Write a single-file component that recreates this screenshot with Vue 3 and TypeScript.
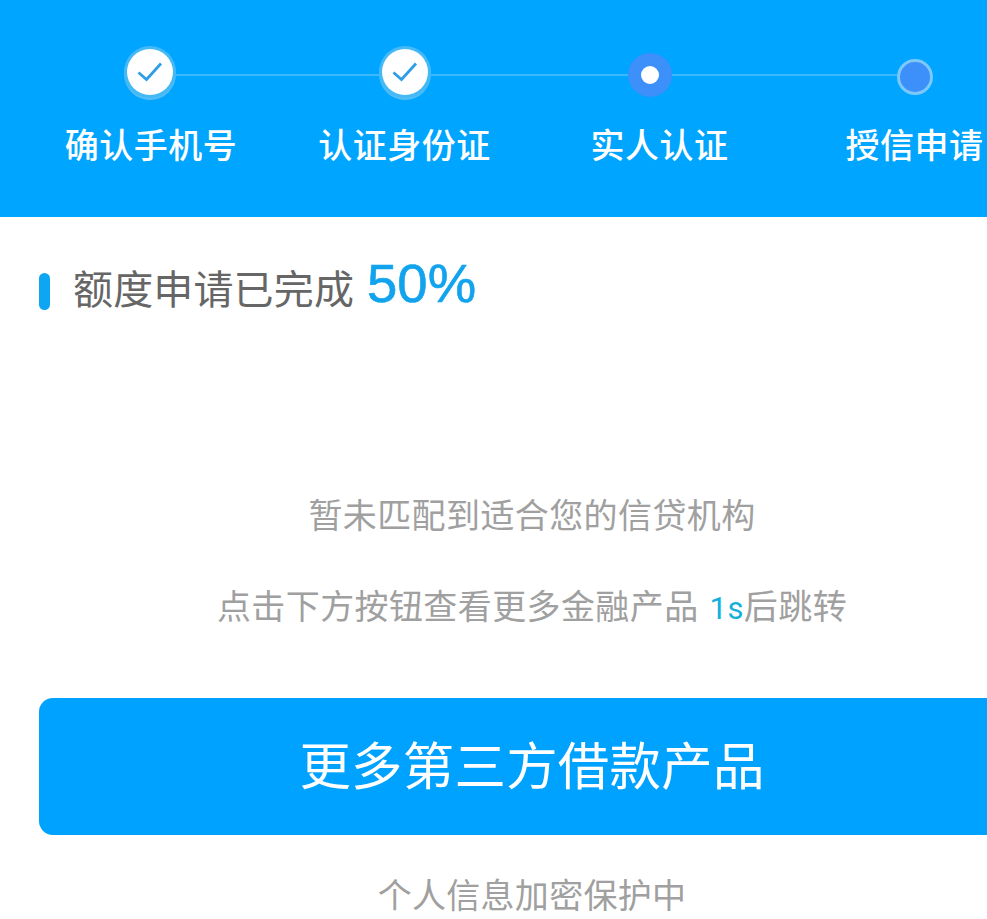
<script setup lang="ts">
interface Step { label: string; state: 'done' | 'current' | 'todo' }
const steps: Step[] = [
  { label: '确认手机号', state: 'done' },
  { label: '认证身份证', state: 'done' },
  { label: '实人认证', state: 'current' },
  { label: '授信申请', state: 'todo' },
]
</script>

<template>
  <div class="viewport">
    <div class="page">
      <header class="steps">
        <div v-for="(s, i) in steps" :key="s.label" class="step">
          <div class="track">
            <span class="line" :class="{ hidden: i === 0, short: s.state === 'current' }"></span>
            <span v-if="s.state === 'done'" class="node done">
              <svg width="26" height="22" viewBox="0 0 26 22" fill="none">
                <path d="M1.5 11.5 L9.5 18.5 L24 2.5" stroke="#2e9fe6" stroke-width="2.8" />
              </svg>
            </span>
            <span v-else-if="s.state === 'current'" class="node current"><i></i></span>
            <span v-else class="node todo"></span>
            <span class="line" :class="{ hidden: i === steps.length - 1 }"></span>
          </div>
          <div class="label">{{ s.label }}</div>
        </div>
      </header>

      <section class="title">
        <span class="bar"></span>
        <span class="title-text">额度申请已完成</span>
        <span class="percent">50%</span>
      </section>

      <section class="message">
        <p class="msg-1">暂未匹配到适合您的信贷机构</p>
        <p class="msg-2">点击下方按钮查看更多金融产品 <em>1s</em>后跳转</p>
      </section>

      <button class="cta" type="button">更多第三方借款产品</button>
      <p class="secure">个人信息加密保护中</p>
    </div>
  </div>
</template>

<style>
html, body { margin: 0; padding: 0; background: #fff; overflow: hidden; }
</style>

<style scoped>
.viewport {
  width: 987px;
  height: 919px;
  overflow: hidden;
  background: #fff;
  font-family: "Noto Sans CJK SC", "Liberation Sans", sans-serif;
}
.page { width: 1064px; }
.steps {
  height: 217px;
  box-sizing: border-box;
  padding: 45px 22px 0;
  background: #00a5ff;
  display: grid;
  grid-template-columns: repeat(4, 255px);
}
.step { display: flex; flex-direction: column; align-items: center; }
.step:first-child .label { margin-left: 3px; }
.track {
  width: 100%;
  height: 60px;
  display: flex;
  align-items: center;
}
.line { flex: 1; height: 2px; background: #3cb8fd; }
.line.short { flex: 0 0 95.5px; }
.line.hidden { visibility: hidden; }
.node { flex: none; display: flex; align-items: center; justify-content: center; border-radius: 50%; box-sizing: border-box; }
.node.done {
  width: 46px;
  height: 46px;
  margin-bottom: 7px;
  background: #fff;
  box-shadow: 0 0 0 3px #45b9f6, 0 2px 0 3px #52bdf3;
}
.node.done svg { display: block; margin-top: 1px; }
.node.current { width: 44px; height: 44px; background: #3d8ffa; }
.node.current i { display: block; width: 18px; height: 18px; border-radius: 50%; background: #fff; }
.node.todo { width: 36px; height: 36px; background: #3d8ffa; border: 3px solid #7cc8f8; margin-top: 3px; }
.label {
  margin-top: 15px;
  font-size: 34px;
  letter-spacing: 0.5px;
  line-height: 48px;
  color: #fff;
  font-weight: 500;
  white-space: nowrap;
}
.title {
  display: flex;
  align-items: center;
  padding: 41px 0 0 39px;
  height: 58px;
}
.bar { width: 11px; height: 37px; border-radius: 6px; background: #0ea5f3; margin-top: 8px; }
.title-text { margin-left: 23px; font-size: 40px; line-height: 58px; color: #666; letter-spacing: 0.15px; }
.percent {
  margin-left: 13px;
  font-family: "Liberation Sans", sans-serif;
  font-size: 54.5px;
  line-height: 58px;
  color: #12a3ee;
  margin-top: -6px;
  -webkit-text-stroke: 0.6px #12a3ee;
}
.message { text-align: center; color: #a0a0a0; font-size: 34px; letter-spacing: 0.4px; line-height: 48px; padding-top: 174px; }
.message p { margin: 0; }
.msg-2 { margin-top: 43px !important; }
.msg-2 em { font-style: normal; font-size: 31px; color: #14b0dc; font-family: Roboto, "Liberation Sans", sans-serif; margin-left: 3px; }
.cta {
  display: block;
  width: 986px;
  height: 137px;
  margin: 65px 0 0 39px;
  padding: 0 0 8px;
  border: 0;
  border-radius: 14px;
  background: #00a2ff;
  color: #fff;
  font-family: inherit;
  font-size: 51.4px;
  letter-spacing: 0.3px;
  line-height: 129px;
}
.secure { margin: 35px 0 0; text-align: center; font-size: 34px; letter-spacing: 0.3px; line-height: 48px; color: #a0a0a0; }
</style>
